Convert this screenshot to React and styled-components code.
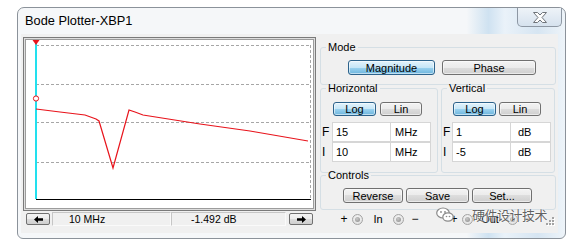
import React from 'react';
import styled, { createGlobalStyle } from 'styled-components';

const GlobalStyle = createGlobalStyle`
  html, body { margin: 0; padding: 0; background: #fff; }
  body {
    font-family: "Liberation Sans", Arial, sans-serif;
    font-size: 11px;
    color: #000;
  }
`;

const Page = styled.div`
  width: 576px;
  height: 246px;
  box-sizing: border-box;
  padding: 7px 0 0 17px;
  overflow: hidden;
`;

const Window = styled.div`
  position: relative;
  width: 549px;
  height: 232px;
  box-sizing: border-box;
  border: 1px solid #8b929a;
  border-radius: 7px 7px 6px 6px;
  background: linear-gradient(90deg, #f5f7f9 0%, #f5f7f9 82%, #cfe2f1 86%, #eaf2f9 89%, #d6e5f2 95%, #eef4f9 100%);
  display: flex;
  flex-direction: column;
`;

const TitleBar = styled.div`
  height: 26px;
  display: flex;
  align-items: flex-start;
  padding-left: 7px;
`;

const Title = styled.div`
  font-size: 12.8px;
  line-height: 13px;
  margin-top: 6px;
  color: #000;
`;

const CloseButton = styled.div`
  margin-left: auto;
  margin-right: 3px;
  width: 45px;
  height: 19px;
  box-sizing: border-box;
  border: 1px solid #8d97a3;
  border-top: none;
  border-radius: 0 0 5px 5px;
  background: linear-gradient(#eef3f8, #d6e2ee);
  display: flex;
  align-items: center;
  justify-content: center;
`;

const Client = styled.div`
  flex: 1;
  margin: 0 7px 5px 3px;
  background: #f0f0f0;
  display: flex;
  padding: 3px 0 0 2px;
`;

const LeftColumn = styled.div`
  width: 293px;
  display: flex;
  flex-direction: column;
`;

const GraphFrame = styled.div`
  height: 174px;
  box-sizing: border-box;
  border: 1px solid #7a7a7a;
  padding: 1px;
  background: #dedede;
  display: flex;
`;

const GraphInner = styled.div`
  flex: 1;
  border: 1px solid #9c9c9c;
  background: #fff;
  display: flex;
`;

const BottomBar = styled.div`
  margin-top: 1px;
  height: 14px;
  display: flex;
  align-items: center;
`;

const ArrowButton = styled.div`
  width: 24px;
  height: 12px;
  box-sizing: border-box;
  margin: 0 ${p => p.$mr || 0}px 0 ${p => p.$ml || 0}px;
  border: 1px solid #707070;
  border-radius: 2px;
  background: linear-gradient(#f4f4f4 0%, #ececec 50%, #dcdcdc 50%, #cfcfcf 100%);
  display: flex;
  align-items: center;
  justify-content: center;
`;

const BarField = styled.div`
  width: ${p => p.$w}px;
  height: 14px;
  box-sizing: border-box;
  border: 1px solid #c6c6c6;
  border-right-color: #fafafa;
  border-bottom-color: #fafafa;
  padding-left: ${p => p.$pl}px;
  font-size: 10.5px;
  line-height: 12px;
`;

const RightColumn = styled.div`
  flex: 1;
  padding: 4px 2px 0 4px;
  display: flex;
  flex-direction: column;
`;

const Group = styled.fieldset`
  margin: ${p => p.$mt || 0}px 0 0 0;
  box-sizing: border-box;
  min-width: 0;
  width: ${p => (p.$w ? `${p.$w}px` : 'auto')};
  height: ${p => p.$h}px;
  border: 1px solid #d5dfe5;
  border-radius: 3px;
  padding: ${p => p.$pt}px 0 0 0;
`;

const Legend = styled.legend`
  padding: 0 2px;
  margin-left: 5px;
  line-height: 13px;
  font-size: 11px;
`;

const ButtonRow = styled.div`
  display: flex;
  gap: ${p => p.$gap}px;
  padding-left: ${p => p.$pl || 0}px;
`;

const WinButton = styled.div`
  width: ${p => p.$w}px;
  height: ${p => p.$h || 15}px;
  box-sizing: border-box;
  border: 1px solid ${p => (p.$on ? '#2c628b' : '#707070')};
  border-radius: 3px;
  background: ${p =>
    p.$on
      ? 'linear-gradient(#e3f3fc 0%, #c6e6f7 50%, #9dd3f0 50%, #6cb5dd 100%)'
      : 'linear-gradient(#f3f3f3 0%, #ebebeb 50%, #dddddd 50%, #cfcfcf 100%)'};
  box-shadow: inset 0 0 0 1px rgba(255, 255, 255, 0.55);
  display: flex;
  align-items: center;
  justify-content: center;
  font-size: 11px;
  line-height: 12px;
`;

const AxisRow = styled.div`
  display: flex;
  gap: 3px;
  margin-top: -3px;
`;

const FieldGrid = styled.div`
  margin-top: 6px;
  display: flex;
  flex-direction: column;
`;

const FieldRow = styled.div`
  display: flex;
  height: 20px;
  align-items: center;
`;

const RowLabel = styled.div`
  width: ${p => p.$w}px;
  box-sizing: border-box;
  padding-left: 1px;
  font-size: 12px;
`;

const Field = styled.div`
  width: ${p => p.$w}px;
  height: 20px;
  box-sizing: border-box;
  background: #fff;
  border: 1px solid #d6d6d6;
  margin-left: -1px;
  padding-left: ${p => p.$pl || 3}px;
  font-size: 11px;
  line-height: 18px;
  &:first-of-type { margin-left: 0; }
`;

const TerminalRow = styled.div`
  margin-top: 2px;
  height: 14px;
  display: flex;
  align-items: center;
  padding-left: 19px;
`;

const Sign = styled.div`
  width: 10px;
  margin-left: ${p => p.$ml || 0}px;
  text-align: center;
  font-size: 12px;
  line-height: 12px;
`;

const TermLabel = styled.div`
  width: ${p => p.$w}px;
  text-align: center;
  font-size: 11px;
`;

const Radio = styled.div`
  width: 11px;
  height: 11px;
  margin-left: ${p => p.$ml || 0}px;
  box-sizing: border-box;
  border-radius: 50%;
  border: 1px solid #a4a4a4;
  background: radial-gradient(circle at 50% 40%, #fbfbfb, #d9d9d9);
  display: flex;
  align-items: center;
  justify-content: center;
  &::after {
    content: '';
    width: 5px;
    height: 5px;
    border-radius: 50%;
    background: radial-gradient(circle at 40% 35%, #c8c8c8, #8a8a8a);
  }
`;

const Grip = styled.div`
  margin-left: auto;
  margin-right: 1px;
  align-self: flex-end;
  display: flex;
`;

const Watermark = styled.div`
  position: absolute;
  left: 418px;
  top: 197px;
  display: flex;
  align-items: center;
  gap: 18px;
  color: rgba(70, 70, 70, 0.85);
  font-family: "Noto Sans CJK SC", sans-serif;
  font-size: 13px;
  letter-spacing: -0.5px;
  text-shadow: 0 0 2px #fff, 0 0 1px #fff;
  pointer-events: none;
`;

const curve = [
  [10, 69], [34, 72], [59, 75], [70, 79], [73, 81], [87, 128],
  [103, 70], [109, 72], [117, 75], [174, 84], [224, 91], [282, 101],
];

const Plot = () => (
  <svg width="287" height="168" viewBox="0 0 287 168">
    {[5, 44, 82, 122].map(y => (
      <line key={y} x1="10" x2="285" y1={y + 0.5} y2={y + 0.5} stroke="#a6a6a6" strokeDasharray="3 2" />
    ))}
    <line x1="284.5" x2="284.5" y1="5" y2="159" stroke="#a6a6a6" strokeDasharray="3 2" />
    <line x1="10" x2="285" y1="159.5" y2="159.5" stroke="#000" />
    <line x1="10" x2="10" y1="0" y2="159" stroke="#22e0ee" strokeWidth="2" />
    <polyline points={curve.map(p => p.join(',')).join(' ')} fill="none" stroke="#e8141c" strokeWidth="1.2" />
    <polygon points="6.5,0 13.5,0 10,5" fill="#e8141c" />
    <circle cx="10" cy="58.5" r="2.6" fill="#fff" stroke="#e8141c" />
  </svg>
);

const Arrow = ({ dir }) => (
  <svg width="9" height="7" viewBox="0 0 9 7">
    {dir === 'left'
      ? <polygon points="0,3.5 4,0 4,2.3 9,2.3 9,4.7 4,4.7 4,7" fill="#000" />
      : <polygon points="9,3.5 5,0 5,2.3 0,2.3 0,4.7 5,4.7 5,7" fill="#000" />}
  </svg>
);

const CloseGlyph = () => (
  <svg width="14" height="11" viewBox="0 0 14 11">
    <polygon
      points="0.5,0.5 4.5,0.5 7,3 9.5,0.5 13.5,0.5 9,5.5 13.5,10.5 9.5,10.5 7,8 4.5,10.5 0.5,10.5 5,5.5"
      fill="#fdfdfd"
      stroke="#6f747a"
      strokeLinejoin="round"
    />
  </svg>
);

const WeChatIcon = () => (
  <svg width="18" height="16" viewBox="0 0 18 16">
    <ellipse cx="7" cy="6" rx="6.3" ry="5" fill="#fff" stroke="#8a8a8a" strokeWidth="1.2" />
    <ellipse cx="12" cy="10" rx="5.2" ry="4.2" fill="#fff" stroke="#8a8a8a" strokeWidth="1.2" />
    <circle cx="5" cy="5" r="0.9" fill="#8a8a8a" />
    <circle cx="9" cy="5" r="0.9" fill="#8a8a8a" />
    <circle cx="10.5" cy="9.5" r="0.8" fill="#8a8a8a" />
    <circle cx="13.5" cy="9.5" r="0.8" fill="#8a8a8a" />
  </svg>
);

const GripDots = () => (
  <svg width="10" height="10" viewBox="0 0 10 10">
    {[[7, 1], [4, 4], [7, 4], [1, 7], [4, 7], [7, 7]].map(([x, y]) => (
      <g key={`${x}-${y}`}>
        <rect x={x + 1} y={y + 1} width="2" height="2" fill="#fff" />
        <rect x={x} y={y} width="2" height="2" fill="#a3a3a3" />
      </g>
    ))}
  </svg>
);

const AxisGroup = ({ title, w, labelW, unitPad, gap, rows }) => (
  <Group $w={w} $h={91} $pt={7}>
    <Legend>{title}</Legend>
    <ButtonRow $gap={gap} $pl={labelW}>
      <WinButton $w={43} $h={14} $on>Log</WinButton>
      <WinButton $w={42} $h={14}>Lin</WinButton>
    </ButtonRow>
    <FieldGrid>
      {rows.map(r => (
        <FieldRow key={r.label}>
          <RowLabel $w={labelW}>{r.label}</RowLabel>
          <Field $w={59}>{r.value}</Field>
          <Field $w={41} $pl={unitPad}>{r.unit}</Field>
        </FieldRow>
      ))}
    </FieldGrid>
  </Group>
);

const App = () => (
  <>
    <GlobalStyle />
    <Page>
      <Window>
        <TitleBar>
          <Title>Bode Plotter-XBP1</Title>
          <CloseButton><CloseGlyph /></CloseButton>
        </TitleBar>
        <Client>
          <LeftColumn>
            <GraphFrame>
              <GraphInner><Plot /></GraphInner>
            </GraphFrame>
            <BottomBar>
              <ArrowButton $ml={3} $mr={2}><Arrow dir="left" /></ArrowButton>
              <BarField $w={119} $pl={16}>10 MHz</BarField>
              <BarField $w={115} $pl={19}>-1.492 dB</BarField>
              <ArrowButton $ml={3}><Arrow dir="right" /></ArrowButton>
            </BottomBar>
          </LeftColumn>
          <RightColumn>
            <Group $h={44} $pt={6}>
              <Legend>Mode</Legend>
              <ButtonRow $gap={7} $pl={27}>
                <WinButton $w={87} $on>Magnitude</WinButton>
                <WinButton $w={94}>Phase</WinButton>
              </ButtonRow>
            </Group>
            <AxisRow>
              <AxisGroup
                title="Horizontal"
                w={118}
                labelW={12}
                unitPad={4}
                gap={4}
                rows={[
                  { label: 'F', value: '15', unit: 'MHz' },
                  { label: 'I', value: '10', unit: 'MHz' },
                ]}
              />
              <AxisGroup
                title="Vertical"
                w={114}
                labelW={11}
                unitPad={7}
                gap={3}
                rows={[
                  { label: 'F', value: '1', unit: 'dB' },
                  { label: 'I', value: '-5', unit: 'dB' },
                ]}
              />
            </AxisRow>
            <Group $h={41} $pt={6} $mt={-4}>
              <Legend>Controls</Legend>
              <ButtonRow $gap={3} $pl={22}>
                <WinButton $w={60}>Reverse</WinButton>
                <WinButton $w={63}>Save</WinButton>
                <WinButton $w={60}>Set...</WinButton>
              </ButtonRow>
            </Group>
            <TerminalRow>
              <Sign>+</Sign>
              <Radio $ml={3} />
              <TermLabel $w={30}>In</TermLabel>
              <Radio />
              <Sign $ml={6}>−</Sign>
              <Sign $ml={29}>+</Sign>
              <Radio $ml={3} />
              <TermLabel $w={34}>Out</TermLabel>
              <Radio />
              <Sign $ml={4}>−</Sign>
              <Grip><GripDots /></Grip>
            </TerminalRow>
          </RightColumn>
        </Client>
        <Watermark>
          <WeChatIcon />
          <span>硬件设计技术</span>
        </Watermark>
      </Window>
    </Page>
  </>
);

export default App;
